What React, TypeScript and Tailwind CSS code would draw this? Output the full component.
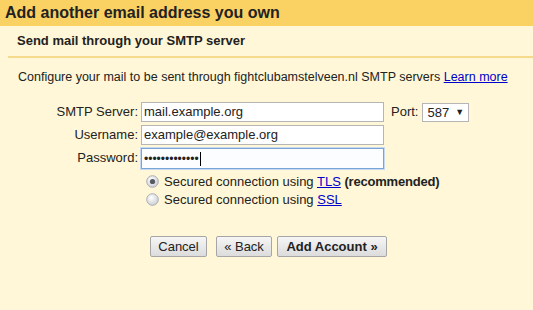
import React from 'react';

// Radio circle drawn like the old Windows / Chrome control
const Radio = ({ checked }: { checked: boolean }) => (
  <svg width="13" height="13" viewBox="0 0 13 13" className="shrink-0">
    <defs>
      <radialGradient id={checked ? 'rg-on' : 'rg-off'} cx="40%" cy="35%" r="70%">
        <stop offset="0%" stopColor="#ffffff" />
        <stop offset="100%" stopColor="#c9ccd3" />
      </radialGradient>
    </defs>
    <circle cx="6.5" cy="6.5" r="5.8" fill={`url(#${checked ? 'rg-on' : 'rg-off'})`} stroke="#a9adb5" strokeWidth="1" />
    {checked && <circle cx="6.5" cy="6.5" r="2.6" fill="#555a63" />}
  </svg>
);

const Button = ({ children, bold, width }: { children: React.ReactNode; bold?: boolean; width: string }) => (
  <button
    className={`${width} h-[21px] border border-[#a6a6a6] rounded-[2px] bg-gradient-to-b from-[#f6f6f6] to-[#dcdcdc] text-[13px] leading-[19px] text-[#222] text-center ${bold ? 'font-bold' : ''}`}
  >
    {children}
  </button>
);

export default function App() {
  return (
    <div className="w-[533px] h-[310px] bg-[#fff7d7] font-['Liberation_Sans',Arial,sans-serif] text-[#222] overflow-hidden">
      {/* title bar */}
      <div className="h-[26px] bg-[#fad163] px-[5px] text-[16px] font-bold leading-[26px] text-[#222]">
        Add another email address you own
      </div>

      <div className="pl-[8px]">
        {/* section heading */}
        <div className="h-[32px] border-b-2 border-[#f5d98c] pl-[9px] text-[13px] font-bold leading-[30px]">
          Send mail through your SMTP server
        </div>

        <div className="pl-[10px] pt-[12px] text-[12.5px] leading-[15px]">
          Configure your mail to be sent through fightclubamstelveen.nl SMTP servers{' '}
          <a className="text-[#0000cc] underline" href="#">Learn more</a>
        </div>

        {/* form */}
        <div className="mt-[17px] grid grid-cols-[130px_auto] gap-x-[3px] gap-y-[3px] text-[13px]">
          <div className="text-right leading-[20px]">SMTP Server:</div>
          <div className="flex items-center">
            <div className="w-[243px] h-[20px] border border-[#b5b5b5] bg-white px-[2px] leading-[18px]">mail.example.org</div>
            <span className="ml-[7px]">Port:</span>
            <div className="ml-[4px] h-[19px] w-[47px] border border-[#b5b5b5] bg-white flex items-center pl-[4px] gap-[6px] leading-[17px]">
              <span>587</span>
              <span className="text-[9px]">▼</span>
            </div>
          </div>

          <div className="text-right leading-[20px]">Username:</div>
          <div>
            <div className="w-[243px] h-[20px] border border-[#b5b5b5] bg-white px-[2px] leading-[18px]">example@example.org</div>
          </div>

          <div className="text-right leading-[20px]">Password:</div>
          <div>
            <div className="w-[243px] h-[21px] border border-[#7aa4d6] bg-[#fbfdff] px-[2px] flex items-center shadow-[0_0_0_1px_#c5daf2]">
              <span className="text-[12px] leading-[18px]">•••••••••••••</span>
              <span className="ml-[1px] w-px h-[14px] bg-black" />
            </div>
          </div>
        </div>

        {/* radios */}
        <div className="pl-[138px] mt-[6px] flex flex-col gap-[5px] text-[13px] leading-[13px]">
          <label className="flex items-center gap-[5px]">
            <Radio checked />
            <span>
              Secured connection using <a className="text-[#0000cc] underline" href="#">TLS</a>{' '}
              <b className="tracking-[-0.2px]">(recommended)</b>
            </span>
          </label>
          <label className="flex items-center gap-[5px]">
            <Radio checked={false} />
            <span>
              Secured connection using <a className="text-[#0000cc] underline" href="#">SSL</a>
            </span>
          </label>
        </div>

        {/* buttons */}
        <div className="pl-[142px] mt-[30px] flex items-center">
          <Button width="w-[57px]">Cancel</Button>
          <span className="ml-[9px]" />
          <Button width="w-[56px]">« Back</Button>
          <span className="ml-[5px]" />
          <Button bold width="w-[110px]">Add Account »</Button>
        </div>
      </div>
    </div>
  );
}
